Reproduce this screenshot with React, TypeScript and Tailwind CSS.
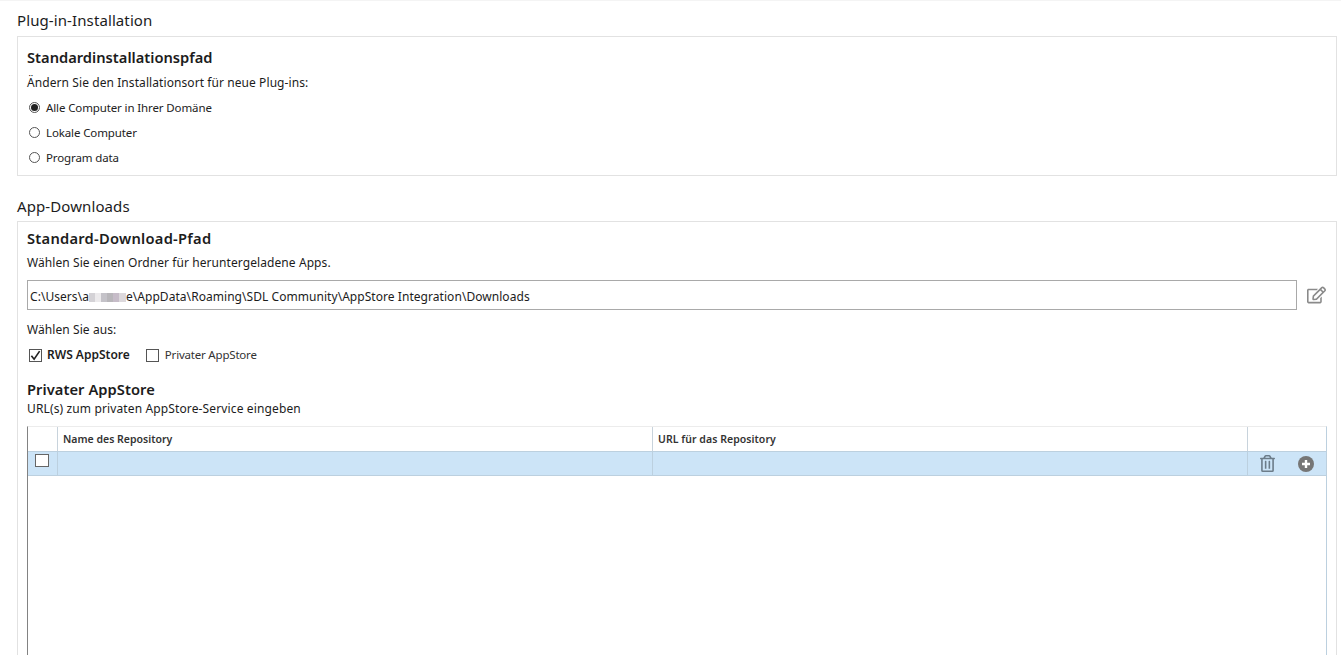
import { FaRegEdit, FaRegTrashAlt } from 'react-icons/fa';

const FONT = "font-['Noto_Sans','Open_Sans',sans-serif]";

function Radio({ label, checked }: { label: string; checked?: boolean }) {
  return (
    <div className="flex h-[25px] items-center">
      <span className="ml-[2px] flex h-[11px] w-[11px] items-center justify-center rounded-full border border-[#555] bg-white">
        {checked && <span className="h-[7px] w-[7px] rounded-full bg-[#222]" />}
      </span>
      <span className="ml-[6px] text-[11.5px] tracking-[-0.12px] text-[#222]">{label}</span>
    </div>
  );
}

export default function App() {
  return (
    <div className={`${FONT} h-[655px] w-[1341px] overflow-hidden bg-white pl-[17px] pr-[4px] text-[#1c1c1c]`}>
      <div className="-ml-[17px] -mr-[4px] border-t border-[#f4f4f4]" />
      <h2 className="flex h-[35px] items-center pb-[2px] pt-[6px] text-[15px] tracking-[0.1px]">Plug-in-Installation</h2>
      <section className="h-[140px] border border-[#e2e2e2] px-[9px] pt-[8px]">
        <h3 className="h-[24px] text-[14.7px] font-semibold leading-[24px]">Standardinstallationspfad</h3>
        <p className="mt-[3px] h-[22px] text-[12px] leading-[22px] tracking-[0.08px]">Ändern Sie den Installationsort für neue Plug-ins:</p>
        <div className="mt-[1px]">
          <Radio label="Alle Computer in Ihrer Domäne" checked />
          <Radio label="Lokale Computer" />
          <Radio label="Program data" />
        </div>
      </section>

      <h2 className="mt-[15px] flex h-[30px] items-center text-[15px] tracking-[0.1px]">App-Downloads</h2>
      <section className="h-[500px] border border-[#e2e2e2] px-[9px] pt-[4px]">
        <h3 className="h-[24px] text-[14.7px] font-semibold leading-[24px] tracking-[0.25px]">Standard-Download-Pfad</h3>
        <p className="mt-[2px] h-[22px] text-[12px] leading-[22px] tracking-[0.08px]">Wählen Sie einen Ordner für heruntergeladene Apps.</p>
        <div className="mt-[6px] flex items-center">
          <div className="flex h-[30px] w-[1270px] items-center border border-[#a9a9a9] pl-[2px] pt-[4px] text-[12px] tracking-[0.05px]">
            <span>C:\Users\a</span>
            <span className="flex h-[9px] w-[37px] blur-[0.6px]">
              <span className="w-[6px] bg-[#d4d2d6]" />
              <span className="w-[6px] bg-[#eceaec]" />
              <span className="w-[6px] bg-[#c4c2c8]" />
              <span className="w-[6px] bg-[#b8b6ba]" />
              <span className="w-[6px] bg-[#c6bcc8]" />
              <span className="w-[7px] bg-[#dcd8dc]" />
            </span>
            <span>e\AppData\Roaming\SDL Community\AppStore Integration\Downloads</span>
          </div>
          <FaRegEdit className="ml-[10px] h-[18px] w-[19px] text-[#8a8a8a]" />
        </div>
        <p className="mt-[10px] h-[20px] text-[12px] leading-[20px] tracking-[0.08px]">Wählen Sie aus:</p>
        <div className="mt-[6px] flex h-[18px] items-center">
          <span className="ml-[2px] flex h-[13px] w-[13px] items-center justify-center border border-[#555] bg-white">
            <svg viewBox="0 0 12 12" className="h-[11px] w-[11px]" fill="none" stroke="#222" strokeWidth="1.8">
              <path d="M1.5 6.2 4.5 10 10.5 1.2" />
            </svg>
          </span>
          <span className="ml-[5px] text-[12px] font-semibold">RWS AppStore</span>
          <span className="ml-[16px] h-[13px] w-[13px] border border-[#555] bg-white" />
          <span className="ml-[6px] text-[11.5px] tracking-[-0.2px] text-[#333]">Privater AppStore</span>
        </div>
        <h3 className="mt-[15px] h-[20px] text-[14.7px] font-semibold leading-[20px] tracking-[0.05px]">Privater AppStore</h3>
        <p className="mt-[1px] h-[17px] text-[12px] leading-[17px] tracking-[0.13px]">URL(s) zum privaten AppStore-Service eingeben</p>

        <div className="mt-[9px] h-[300px] w-[1300px] border-l border-r border-t border-l-[#828282] border-r-[#bcd0df] border-t-[#ececec]">
          <div className="flex h-[25px] border-b border-[#bcd0df]">
            <div className="w-[30px] border-r border-[#c8d3dc]" />
            <div className="flex w-[595px] items-center border-r border-[#c8d3dc] pl-[5px] pt-[2px] text-[10.5px] font-semibold text-[#333]">Name des Repository</div>
            <div className="flex w-[595px] items-center border-r border-[#c8d3dc] pl-[5px] pt-[2px] text-[10.5px] font-semibold tracking-[0.05px] text-[#333]">URL für das Repository</div>
          </div>
          <div className="flex h-[24px] border-b border-[#bcd0df] bg-[#cce4f7]">
            <div className="flex w-[30px] items-center justify-center border-r border-[#bcd0df]">
              <span className="mb-[6px] mr-[2px] h-[13px] w-[14px] border border-[#666] bg-white" />
            </div>
            <div className="w-[595px] border-r border-[#bcd0df]" />
            <div className="w-[595px] border-r border-[#bcd0df]" />
            <div className="flex flex-1 items-center pl-[12px]">
              <FaRegTrashAlt className="h-[17px] w-[15px] text-[#6c7c89]" />
              <span className="ml-[23px] flex h-[16px] w-[16px] items-center justify-center rounded-full bg-[#767676]">
                <svg viewBox="0 0 16 16" className="h-[16px] w-[16px]" stroke="#fff" strokeWidth="2.4">
                  <path d="M8 4v8M4 8h8" />
                </svg>
              </span>
            </div>
          </div>
        </div>
      </section>
    </div>
  );
}
